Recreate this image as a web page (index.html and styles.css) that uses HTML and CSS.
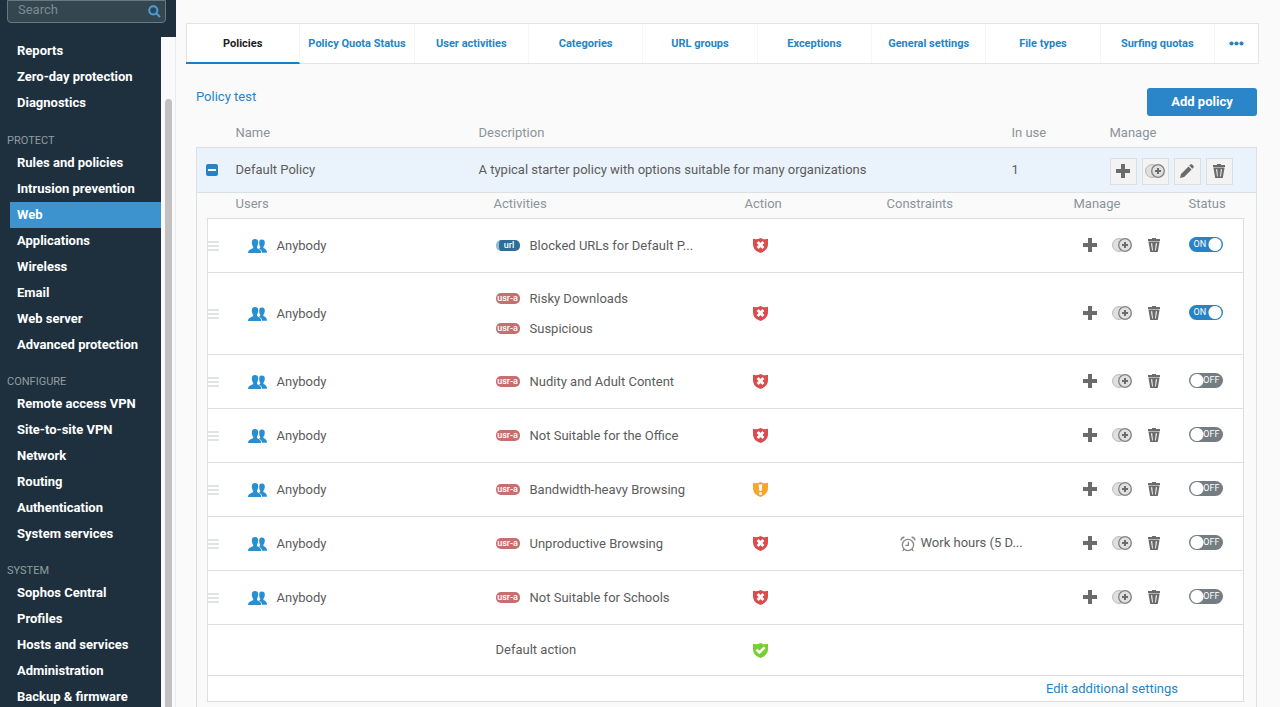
FILE: index.html
```html
<!DOCTYPE html>
<html lang="en">
<head>
    <meta charset="utf-8">
    <title>Web policies</title>
    <link rel="stylesheet" href="styles.css">
</head>
<body>
    <svg class="sprite" aria-hidden="true">
        <symbol id="i-users" viewBox="0 0 19 14">
            <path d="M11.4 1.8C12 0.6 13 0.4 14 0.4 16 0.4 17 1.8 16.8 3.8 16.7 5.6 16.3 6.8 15.4 7.8V9C16.4 9.8 18.9 10 19 13.8H14C13.9 11.8 12.8 10.6 11 9.8L12.2 8.8V7.9C11.3 6.8 10.9 4 11.4 1.8Z"/>
            <path d="M3.8 3.5C3.8 1.2 5 0.1 7 0.1 9.2 0.1 10.3 1.4 10.2 3.5 10.1 5.3 9.8 6.6 9 7.8V9C10 10 13.2 10.2 13.2 14H0C0 10.2 4.4 10 5.2 9V7.8C4.3 6.7 3.8 5.2 3.8 3.5Z"/>
        </symbol>
        <symbol id="i-plus" viewBox="0 0 14 14">
            <path d="M5 0H9V5H14V9H9V14H5V9H0V5H5Z"/>
        </symbol>
        <symbol id="i-clone" viewBox="0 0 20 14">
            <circle cx="7" cy="7" r="6.4" fill="#e0e0e0" stroke="#b5b5b5"/>
            <circle cx="13" cy="7" r="6.3" fill="#e0e0e0" stroke="#808080" stroke-width="1.3"/>
            <path d="M12 4H14V6H16V8H14V10H12V8H10V6H12Z"/>
        </symbol>
        <symbol id="i-pencil" viewBox="0 0 14 14">
            <path d="M0 14L1 9.9 8.5 2.4 11.6 5.5 4.1 13Z M9.3 1.6L10.4 0.5C11 0 11.6 0 12.1 0.5L13.5 1.9C14 2.4 14 3 13.5 3.6L12.4 4.7Z"/>
        </symbol>
        <symbol id="i-trash" viewBox="0 0 12 14">
            <path d="M0 1H4V0H8V1H12V3H0Z"/>
            <path fill-rule="evenodd" d="M0.4 3.6H11.6L9.8 14H2.2Z M3 5.2L4.1 12.4H4.9L4.2 5.2Z M7.8 5.2L7.1 12.4H7.9L9 5.2Z"/>
        </symbol>
        <symbol id="i-block" viewBox="0 0 15 15">
            <path fill="#dc4a4d" d="M0 0.8C2.6 1.6 5 1.3 7.5 0 10 1.3 12.4 1.6 15 0.8V6C15 10.5 12 13.5 7.5 15 3 13.5 0 10.5 0 6Z"/>
            <path stroke="#fff" stroke-width="2.8" d="M4.6 4.1L10.4 9.9M10.4 4.1L4.6 9.9"/>
        </symbol>
        <symbol id="i-warn" viewBox="0 0 15 15">
            <path fill="#f7a430" d="M0 0.8C2.6 1.6 5 1.3 7.5 0 10 1.3 12.4 1.6 15 0.8V6C15 10.5 12 13.5 7.5 15 3 13.5 0 10.5 0 6Z"/>
            <path fill="#fff" d="M5.6 2.4H9.4L8.6 9H6.4Z"/>
            <circle cx="7.5" cy="11.4" r="1.5" fill="#fff"/>
        </symbol>
        <symbol id="i-allow" viewBox="0 0 15 15">
            <path fill="#76cf35" d="M0 0.8C2.6 1.6 5 1.3 7.5 0 10 1.3 12.4 1.6 15 0.8V6C15 10.5 12 13.5 7.5 15 3 13.5 0 10.5 0 6Z"/>
            <path fill="none" stroke="#fff" stroke-width="2.6" d="M3.4 6.6L6.4 9.4 11.6 4.4"/>
        </symbol>
        <symbol id="i-clock" viewBox="0 0 16 16">
            <g fill="none" stroke="#858585" stroke-width="1.3">
                <circle cx="8" cy="9" r="5.6"/>
                <path d="M0.8 4.4C1.2 2.6 2.6 1.3 4.4 1M15.2 4.4C14.8 2.6 13.4 1.3 11.6 1M8.4 5.8V9.4H5.4M4 13.2L2.8 15M12 13.2L13.2 15"/>
            </g>
        </symbol>
    </svg>

    <div class="app">
        <aside class="sidebar">
            <form class="search">
                <input type="search" placeholder="Search" aria-label="Search">
                <button type="button" aria-label="Run search">
                    <svg width="13" height="13" viewBox="0 0 13 13"><circle cx="5.3" cy="5.3" r="4.1"/><path d="M8.4 8.4L12 12"/></svg>
                </button>
            </form>
            <div class="nav-wrap">
                <nav class="nav">
                    <a href="#">Reports</a>
                    <a href="#">Zero-day protection</a>
                    <a href="#">Diagnostics</a>
                    <h2>PROTECT</h2>
                    <a href="#">Rules and policies</a>
                    <a href="#">Intrusion prevention</a>
                    <a href="#" class="current">Web</a>
                    <a href="#">Applications</a>
                    <a href="#">Wireless</a>
                    <a href="#">Email</a>
                    <a href="#">Web server</a>
                    <a href="#">Advanced protection</a>
                    <h2>CONFIGURE</h2>
                    <a href="#">Remote access VPN</a>
                    <a href="#">Site-to-site VPN</a>
                    <a href="#">Network</a>
                    <a href="#">Routing</a>
                    <a href="#">Authentication</a>
                    <a href="#">System services</a>
                    <h2>SYSTEM</h2>
                    <a href="#">Sophos Central</a>
                    <a href="#">Profiles</a>
                    <a href="#">Hosts and services</a>
                    <a href="#">Administration</a>
                    <a href="#">Backup &amp; firmware</a>
                </nav>
                <div class="scrollbar"><div class="thumb"></div></div>
            </div>
        </aside>

        <main class="main">
            <nav class="tabs">
                <a href="#" class="active">Policies</a>
                <a href="#">Policy Quota Status</a>
                <a href="#">User activities</a>
                <a href="#">Categories</a>
                <a href="#">URL groups</a>
                <a href="#">Exceptions</a>
                <a href="#">General settings</a>
                <a href="#">File types</a>
                <a href="#">Surfing quotas</a>
                <button type="button" class="more" aria-label="More tabs">
                    <svg width="15" height="5" viewBox="0 0 15 5"><circle cx="2.5" cy="2.5" r="2.1"/><circle cx="7.5" cy="2.5" r="2.1"/><circle cx="12.5" cy="2.5" r="2.1"/></svg>
                </button>
            </nav>

            <div class="content">
                <div class="toolbar">
                    <a href="#">Policy test</a>
                    <button type="button" class="add">Add policy</button>
                </div>

                <table class="policies">
                    <thead>
                        <tr>
                            <th class="p-toggle"></th>
                            <th class="p-name">Name</th>
                            <th>Description</th>
                            <th class="p-use">In use</th>
                            <th class="p-manage">Manage</th>
                        </tr>
                    </thead>
                    <tbody>
                        <tr class="policy">
                            <td><button type="button" class="collapse" aria-label="Collapse"></button></td>
                            <td>Default Policy</td>
                            <td>A typical starter policy with options suitable for many organizations</td>
                            <td>1</td>
                            <td>
                                <div class="tools boxed">
                                    <button type="button" aria-label="Add rule"><svg class="plus"><use href="#i-plus"/></svg></button>
                                    <button type="button" aria-label="Clone"><svg class="clone"><use href="#i-clone"/></svg></button>
                                    <button type="button" aria-label="Edit"><svg class="pencil"><use href="#i-pencil"/></svg></button>
                                    <button type="button" aria-label="Delete"><svg class="trash"><use href="#i-trash"/></svg></button>
                                </div>
                            </td>
                        </tr>
                        <tr>
                            <td colspan="5" class="detail">
                                <table class="rules">
                                    <thead>
                                        <tr>
                                            <th class="r-handle"></th>
                                            <th class="r-users">Users</th>
                                            <th class="r-activities">Activities</th>
                                            <th class="r-action">Action</th>
                                            <th>Constraints</th>
                                            <th class="r-manage">Manage</th>
                                            <th class="r-status">Status</th>
                                        </tr>
                                    </thead>
                                    <tbody>
                                        <tr>
                                            <td><div class="handle"></div></td>
                                            <td class="users"><svg class="people"><use href="#i-users"/></svg>Anybody</td>
                                            <td class="activities"><div><span class="badge url">url</span>Blocked URLs for Default P...</div></td>
                                            <td class="action"><svg class="shield"><use href="#i-block"/></svg></td>
                                            <td></td>
                                            <td class="manage"><div class="tools">
                                                <button type="button" aria-label="Add rule"><svg class="plus"><use href="#i-plus"/></svg></button>
                                                <button type="button" aria-label="Clone"><svg class="clone"><use href="#i-clone"/></svg></button>
                                                <button type="button" aria-label="Delete"><svg class="trash"><use href="#i-trash"/></svg></button>
                                            </div></td>
                                            <td class="status"><label class="switch"><input type="checkbox" aria-label="Status" checked><span class="on">ON</span><span class="off">OFF</span></label></td>
                                        </tr>
                                        <tr class="tall">
                                            <td><div class="handle"></div></td>
                                            <td class="users"><svg class="people"><use href="#i-users"/></svg>Anybody</td>
                                            <td class="activities">
                                                <div><span class="badge">usr-a</span>Risky Downloads</div>
                                                <div><span class="badge">usr-a</span>Suspicious</div>
                                            </td>
                                            <td class="action"><svg class="shield"><use href="#i-block"/></svg></td>
                                            <td></td>
                                            <td class="manage"><div class="tools">
                                                <button type="button" aria-label="Add rule"><svg class="plus"><use href="#i-plus"/></svg></button>
                                                <button type="button" aria-label="Clone"><svg class="clone"><use href="#i-clone"/></svg></button>
                                                <button type="button" aria-label="Delete"><svg class="trash"><use href="#i-trash"/></svg></button>
                                            </div></td>
                                            <td class="status"><label class="switch"><input type="checkbox" aria-label="Status" checked><span class="on">ON</span><span class="off">OFF</span></label></td>
                                        </tr>
                                        <tr>
                                            <td><div class="handle"></div></td>
                                            <td class="users"><svg class="people"><use href="#i-users"/></svg>Anybody</td>
                                            <td class="activities"><div><span class="badge">usr-a</span>Nudity and Adult Content</div></td>
                                            <td class="action"><svg class="shield"><use href="#i-block"/></svg></td>
                                            <td></td>
                                            <td class="manage"><div class="tools">
                                                <button type="button" aria-label="Add rule"><svg class="plus"><use href="#i-plus"/></svg></button>
                                                <button type="button" aria-label="Clone"><svg class="clone"><use href="#i-clone"/></svg></button>
                                                <button type="button" aria-label="Delete"><svg class="trash"><use href="#i-trash"/></svg></button>
                                            </div></td>
                                            <td class="status"><label class="switch"><input type="checkbox" aria-label="Status"><span class="on">ON</span><span class="off">OFF</span></label></td>
                                        </tr>
                                        <tr>
                                            <td><div class="handle"></div></td>
                                            <td class="users"><svg class="people"><use href="#i-users"/></svg>Anybody</td>
                                            <td class="activities"><div><span class="badge">usr-a</span>Not Suitable for the Office</div></td>
                                            <td class="action"><svg class="shield"><use href="#i-block"/></svg></td>
                                            <td></td>
                                            <td class="manage"><div class="tools">
                                                <button type="button" aria-label="Add rule"><svg class="plus"><use href="#i-plus"/></svg></button>
                                                <button type="button" aria-label="Clone"><svg class="clone"><use href="#i-clone"/></svg></button>
                                                <button type="button" aria-label="Delete"><svg class="trash"><use href="#i-trash"/></svg></button>
                                            </div></td>
                                            <td class="status"><label class="switch"><input type="checkbox" aria-label="Status"><span class="on">ON</span><span class="off">OFF</span></label></td>
                                        </tr>
                                        <tr>
                                            <td><div class="handle"></div></td>
                                            <td class="users"><svg class="people"><use href="#i-users"/></svg>Anybody</td>
                                            <td class="activities"><div><span class="badge">usr-a</span>Bandwidth-heavy Browsing</div></td>
                                            <td class="action"><svg class="shield"><use href="#i-warn"/></svg></td>
                                            <td></td>
                                            <td class="manage"><div class="tools">
                                                <button type="button" aria-label="Add rule"><svg class="plus"><use href="#i-plus"/></svg></button>
                                                <button type="button" aria-label="Clone"><svg class="clone"><use href="#i-clone"/></svg></button>
                                                <button type="button" aria-label="Delete"><svg class="trash"><use href="#i-trash"/></svg></button>
                                            </div></td>
                                            <td class="status"><label class="switch"><input type="checkbox" aria-label="Status"><span class="on">ON</span><span class="off">OFF</span></label></td>
                                        </tr>
                                        <tr>
                                            <td><div class="handle"></div></td>
                                            <td class="users"><svg class="people"><use href="#i-users"/></svg>Anybody</td>
                                            <td class="activities"><div><span class="badge">usr-a</span>Unproductive Browsing</div></td>
                                            <td class="action"><svg class="shield"><use href="#i-block"/></svg></td>
                                            <td class="constraints"><svg class="clock"><use href="#i-clock"/></svg>Work hours (5 D...</td>
                                            <td class="manage"><div class="tools">
                                                <button type="button" aria-label="Add rule"><svg class="plus"><use href="#i-plus"/></svg></button>
                                                <button type="button" aria-label="Clone"><svg class="clone"><use href="#i-clone"/></svg></button>
                                                <button type="button" aria-label="Delete"><svg class="trash"><use href="#i-trash"/></svg></button>
                                            </div></td>
                                            <td class="status"><label class="switch"><input type="checkbox" aria-label="Status"><span class="on">ON</span><span class="off">OFF</span></label></td>
                                        </tr>
                                        <tr>
                                            <td><div class="handle"></div></td>
                                            <td class="users"><svg class="people"><use href="#i-users"/></svg>Anybody</td>
                                            <td class="activities"><div><span class="badge">usr-a</span>Not Suitable for Schools</div></td>
                                            <td class="action"><svg class="shield"><use href="#i-block"/></svg></td>
                                            <td></td>
                                            <td class="manage"><div class="tools">
                                                <button type="button" aria-label="Add rule"><svg class="plus"><use href="#i-plus"/></svg></button>
                                                <button type="button" aria-label="Clone"><svg class="clone"><use href="#i-clone"/></svg></button>
                                                <button type="button" aria-label="Delete"><svg class="trash"><use href="#i-trash"/></svg></button>
                                            </div></td>
                                            <td class="status"><label class="switch"><input type="checkbox" aria-label="Status"><span class="on">ON</span><span class="off">OFF</span></label></td>
                                        </tr>
                                        <tr class="default">
                                            <td></td>
                                            <td></td>
                                            <td class="activities">Default action</td>
                                            <td class="action"><svg class="shield"><use href="#i-allow"/></svg></td>
                                            <td></td>
                                            <td></td>
                                            <td></td>
                                        </tr>
                                        <tr class="extra">
                                            <td colspan="7"><a href="#">Edit additional settings</a></td>
                                        </tr>
                                    </tbody>
                                </table>
                            </td>
                        </tr>
                    </tbody>
                </table>
            </div>
        </main>
    </div>
</body>
</html>
```
FILE: styles.css
```css
* {
    box-sizing: border-box;
}
body {
    margin: 0;
    font-family: Roboto, "Liberation Sans", sans-serif;
    font-size: 13px;
    line-height: 16px;
    color: #5c5c5c;
    background: #fafafa;
}
a {
    color: #2684c6;
    text-decoration: none;
}
button {
    padding: 0;
    border: none;
    background: none;
    font: inherit;
    cursor: pointer;
}
svg {
    display: block;
}
.sprite {
    display: none;
}
.app {
    display: flex;
    height: 100vh;
    overflow: hidden;
}

/* sidebar */
.sidebar {
    display: flex;
    flex-direction: column;
    flex: none;
    width: 176px;
}
.search {
    display: flex;
    flex: none;
    height: 37px;
    padding: 0 10px 14px 7px;
    background: #1e303d;
}
.search input {
    flex: 1;
    min-width: 0;
    padding: 0 30px 4px 10px;
    border: 1px solid #6b7880;
    border-radius: 0 0 4px 4px;
    background: #34464f;
    color: #fff;
    font: inherit;
    outline: none;
}
.search input::placeholder {
    color: #7f8a91;
}
.search button {
    width: 13px;
    margin-left: -18px;
    margin-right: 5px;
}
.search svg {
    fill: none;
    stroke: #4a9fdb;
    stroke-width: 2;
}
.nav-wrap {
    display: flex;
    flex: 1;
    min-height: 0;
}
.nav {
    flex: 1;
    padding-top: 1px;
    background: #1e303d;
    overflow: hidden;
}
.nav a {
    display: block;
    margin-left: 10px;
    padding-left: 7px;
    line-height: 26px;
    font-weight: 700;
    color: #fff;
}
.nav .current {
    background: #3c93ce;
}
.nav h2 {
    margin: 0;
    padding: 17px 0 1px 7px;
    font-size: 11px;
    font-weight: 400;
    line-height: 16px;
    color: #929da3;
}
.nav h2 ~ h2 {
    padding-top: 16px;
}
.scrollbar {
    width: 15px;
    padding: 62px 3px 0 4px;
    border-right: 1px solid #ececec;
}
.thumb {
    height: 100%;
    border-radius: 4px 4px 0 0;
    background: #c1c1c1;
}

/* tabs */
.main {
    flex: 1;
    min-width: 0;
    padding: 23px 21px 0 10px;
}
.tabs {
    display: flex;
    height: 41px;
    border: 1px solid #e2e4e5;
    background: #fff;
}
.tabs a {
    flex: 1;
    border-right: 1px solid #f6f6f6;
    font-size: 11px;
    font-weight: 700;
    line-height: 39px;
    text-align: center;
    white-space: nowrap;
}
.tabs .active {
    margin: 0 0 -1px -1px;
    border-bottom: 2px solid #1580ca;
    color: #222;
}
.more {
    display: flex;
    align-items: center;
    justify-content: center;
    width: 43px;
    fill: #2684c6;
}

/* policy list */
.content {
    padding: 24px 2px 0 10px;
}
.toolbar {
    display: flex;
    justify-content: space-between;
    height: 29px;
}
.toolbar a {
    line-height: 18px;
}
.add {
    width: 110px;
    height: 28px;
    border-radius: 3px;
    background: #2a86c8;
    color: #fff;
    font-weight: 700;
}
table {
    width: 100%;
    table-layout: fixed;
    border-collapse: collapse;
}
th, td {
    padding: 0;
    text-align: left;
}
th {
    font-weight: 400;
    color: #8b9499;
}
.policies > thead th {
    height: 30px;
    padding-top: 2px;
}
.policies > tbody {
    border: 1px solid #dbe0e3;
}
.p-toggle {
    width: 39px;
}
.p-name {
    width: 243px;
}
.p-use {
    width: 98px;
}
.p-manage {
    width: 147px;
}
.policy td {
    height: 45px;
    border-bottom: 1px solid #dbe0e3;
    background: #eaf3fb;
}
.collapse {
    display: block;
    width: 12px;
    height: 12px;
    margin-left: 9px;
    border: solid #2684c6;
    border-width: 5px 2px;
    border-radius: 2px;
    background: #fff;
}
.tools {
    display: flex;
    align-items: center;
    padding-bottom: 2px;
    fill: #6b6b6b;
}
.tools button {
    display: flex;
    align-items: center;
    justify-content: center;
    width: 32px;
}
.boxed {
    gap: 5px;
    padding: 3px 0 0;
}
.boxed button {
    width: 27px;
    height: 27px;
    border: 1px solid #dcdfe1;
    background: #f3f3f3;
}
.plus, .pencil {
    width: 14px;
    height: 14px;
}
.clone {
    width: 20px;
    height: 14px;
}
.trash {
    width: 12px;
    height: 14px;
}

/* rules of the open policy */
.detail {
    padding: 0 12px 30px 10px;
}
.rules > thead th {
    height: 26px;
    padding-bottom: 2px;
}
.r-handle {
    width: 28px;
}
.r-users {
    width: 258px;
}
.r-activities {
    width: 251px;
}
.r-action {
    width: 142px;
}
.r-manage {
    width: 115px;
}
.r-status {
    width: 55px;
}
.rules tbody {
    border: 1px solid #dbe0e3;
    background: #fff;
}
.rules td {
    height: 54px;
    border-bottom: 1px solid #dbe0e3;
}
.rules .tall td {
    height: 82px;
}
.rules .default td {
    height: 51px;
}
.rules .extra td {
    height: 26px;
    padding-right: 65px;
    text-align: right;
}
.handle {
    width: 11px;
    height: 10px;
    border: solid #e0e3e4;
    border-width: 2px 0;
    background: linear-gradient(#e0e3e4, #e0e3e4) center / 100% 2px no-repeat;
}
.people {
    display: inline-block;
    width: 19px;
    height: 14px;
    margin-right: 10px;
    fill: #2a8fd0;
    vertical-align: middle;
}
.rules .users {
    padding-left: 12px;
}
.rules .activities {
    padding-left: 2px;
}
.activities div {
    display: flex;
    align-items: center;
    white-space: nowrap;
}
.activities div + div {
    margin-top: 14px;
}
.badge {
    width: 24px;
    height: 11px;
    margin-right: 10px;
    border-radius: 5px;
    background: #c76f6e;
    color: #fff;
    font-size: 9px;
    font-weight: 500;
    line-height: 10px;
    text-align: center;
}
.url {
    border-left: 3px solid #8fbdd6;
    background: #2c6f98;
}
.rules .action {
    padding-left: 8px;
}
.shield {
    width: 15px;
    height: 15px;
}
.rules .constraints {
    padding-left: 13px;
}
.clock {
    display: inline-block;
    width: 16px;
    height: 16px;
    margin-right: 5px;
    vertical-align: middle;
}
.rules .manage {
    padding-left: 0;
}
.rules .status {
    padding-bottom: 2px;
}
.switch {
    display: block;
    position: relative;
    width: 34px;
    height: 15px;
    font-size: 9px;
    line-height: 15px;
    color: #fff;
}
.switch input {
    appearance: none;
    display: block;
    width: 100%;
    height: 100%;
    margin: 0;
    border-radius: 8px;
    background: radial-gradient(circle at 8px 50%, #fff 6px, transparent 7px) #737d82;
}
.switch input:checked {
    background: radial-gradient(circle at 26px 50%, #fff 6px, transparent 7px) #2684c6;
}
.switch span {
    position: absolute;
    top: 0;
    pointer-events: none;
}
.on {
    left: 5px;
}
.off {
    right: 3px;
}
.switch input:checked ~ .off,
.switch input:not(:checked) ~ .on {
    display: none;
}
```
